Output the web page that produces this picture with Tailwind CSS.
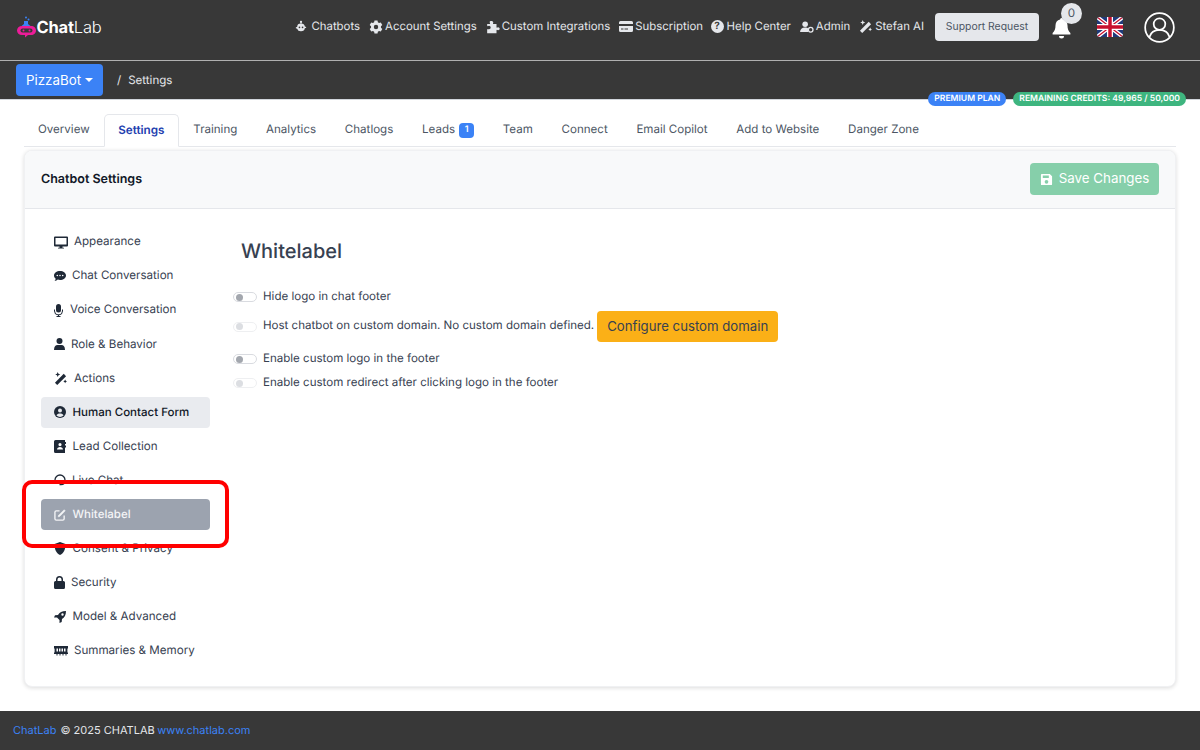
<!DOCTYPE html>
<html lang="en">
<head>
<meta charset="utf-8">
<title>ChatLab Settings</title>
<script src="https://cdn.jsdelivr.net/npm/@tailwindcss/browser@4"></script>
</head>
<body class="font-[Inter,sans-serif] [text-rendering:geometricPrecision] [&_svg]:shrink-0 bg-white text-[#374151] w-[1200px] h-[750px] overflow-hidden relative flex flex-col">

<header class="h-[61px] shrink-0 bg-[#383838] border-b border-[#b0b0b0] flex items-center pl-[17px] pr-[25px] pb-[6px] text-[11.4px] text-[#e5e7eb]">
  <div class="flex items-center">
    <svg class="w-[20px] h-[22px]" viewBox="0 0 20 22">
      <circle cx="9" cy="1.500" r="1" fill="#3b82f6"/><circle cx="11.500" cy="3.500" r="1" fill="#3b82f6"/>
      <path d="M7 5h4v3l2.500 2h-9L7 8z" fill="#3b82f6"/>
      <path d="M5 10h9c3 0 5 2 5 4.500s-2 4.500-5 4.500h-3l-3 2.500v-2.500H5c-3 0-5-2-5-4.500S2 10 5 10z" fill="#ec1c99"/>
      <rect x="3.500" y="12.500" width="12" height="4" rx="2" fill="#383838"/>
      <circle cx="6.500" cy="14.500" r="1" fill="#ec1c99"/><circle cx="12.500" cy="14.500" r="1" fill="#ec1c99"/>
    </svg>
    <span class="text-[16.500px] text-white font-bold ml-[-0.5px] tracking-[-0.2px]">Chat<span class="font-light">Lab</span></span>
  </div>
  <nav class="ml-auto flex items-center gap-[9px] whitespace-nowrap">
    <a class="flex items-center gap-[4px]"><svg class="w-[12px] h-[13px]" viewBox="0 0 14 14" fill="#e5e7eb"><rect x="6.300" y="0.500" width="1.400" height="3"/><circle cx="7" cy="1.500" r="1.300"/><path d="M7 3.500a4.500 4 0 0 1 4.500 3.500l1.500.5v1l-1.500.5A4.500 4 0 0 1 7 12.500 4.500 4 0 0 1 2.500 9.500L1 9V8l1.500-.5A4.500 4 0 0 1 7 3.500z"/><circle cx="5.200" cy="8" r="1" fill="#383838"/><circle cx="8.800" cy="8" r="1" fill="#383838"/></svg>Chatbots</a>
    <a class="flex items-center gap-[2px]"><svg class="w-[14px] h-[14px]" viewBox="0 0 24 24" fill="#e5e7eb"><path fill-rule="evenodd" d="M14.600 1l.6 3 2 1.200 3-1 2.600 4.500-2.300 2 0 2.600 2.300 2-2.600 4.500-3-1-2 1.200-.6 3H9.400l-.6-3-2-1.200-3 1L1.200 15.300l2.300-2v-2.600l-2.300-2L3.800 4.200l3 1 2-1.200.6-3zM12 8.200a3.800 3.800 0 1 0 0 7.600 3.800 3.800 0 0 0 0-7.600z"/></svg>Account Settings</a>
    <a class="flex items-center gap-[2px]"><svg class="w-[14px] h-[14px]" viewBox="0 0 24 24" fill="#e5e7eb"><path d="M9 1.500c2 0 3.500 1.200 3.500 2.800 0 .9-.6 1.300-.6 2 0 .4.400.7 1 .7H18v5.100c0 .6.300 1 .7 1 .7 0 1.100-.6 2-.6 1.600 0 2.800 1.300 2.800 2.500s-1.200 2.500-2.800 2.500c-.9 0-1.300-.6-2-.6-.4 0-.7.400-.7 1V22.500H2v-6c0-.8.500-1.200 1-1.200.7 0 1.100.7 2.200.7 1.500 0 2.800-1.300 2.800-3s-1.300-3-2.800-3c-1.100 0-1.500.7-2.200.7-.5 0-1-.4-1-1.200V7h4.100c.6 0 1-.3 1-.7 0-.7-.6-1.100-.6-2C5.500 2.700 7 1.500 9 1.500z"/></svg>Custom Integrations</a>
    <a class="flex items-center gap-[2px]"><svg class="w-[14px] h-[13px]" viewBox="0 0 14 13" fill="#e5e7eb"><path d="M1.500 1h11A1.500 1.500 0 0 1 14 2.500V4H0V2.500A1.500 1.500 0 0 1 1.500 1zM0 6h14v4.500a1.500 1.500 0 0 1-1.500 1.500h-11A1.500 1.500 0 0 1 0 10.500z"/><rect x="2" y="8.500" width="2.500" height="1" fill="#383838"/><rect x="5.500" y="8.500" width="3.500" height="1" fill="#383838"/></svg>Subscription</a>
    <a class="-ml-[1.500px] flex items-center gap-[3px]"><span class="w-[13px] h-[13px] rounded-full bg-[#e5e7eb] text-[#383838] text-[10px] font-bold flex items-center justify-center">?</span>Help Center</a>
    <a class="flex items-center gap-[2px]"><svg class="w-[14px] h-[12px]" viewBox="0 0 15 13" fill="#e5e7eb"><circle cx="5.500" cy="3.500" r="3"/><path d="M0 12c0-3 2-5 5.500-5 1.500 0 2.500.4 3.300 1v4z"/><circle cx="11.500" cy="9.500" r="2.500" fill="none" stroke="#e5e7eb" stroke-width="1.400"/></svg>Admin</a>
    <a class="flex items-center gap-[3px]"><svg class="w-[13px] h-[13px]" viewBox="0 0 14 14" fill="#e5e7eb"><path d="M10.500 2l2.500 2.500L3.500 14 1 11.500z"/><path d="M4 0l.8 1.900 1.900.8-1.900.8L4 5.400l-.8-1.900-1.900-.8 1.900-.8zM12 8l.7 1.500 1.300.6-1.300.6-.7 1.500-.7-1.500-1.300-.6 1.300-.6z"/></svg>Stefan AI</a>
  </nav>
  <button class="ml-[11px] h-[28px] w-[104px] rounded-[4px] bg-[#e5e7eb] text-[#4b5563] text-[10.42px] whitespace-nowrap flex items-center justify-center">Support Request</button>
  <div class="relative ml-[11px] w-[24px] h-[30px] flex items-center">
    <svg class="w-[19px] h-[22px] mt-[2px] ml-[2px]" viewBox="0 0 19 22" fill="#fff"><path d="M9.500 1a1.400 1.400 0 0 1 1.400 1.500c3 .6 4.600 3 4.600 6 0 3.500.8 5.400 2.900 7.500v1.500H.6V16c2.100-2.100 2.900-4 2.900-7.500 0-3 1.600-5.400 4.600-6A1.400 1.400 0 0 1 9.500 1z"/><path d="M7 19h5a2.500 2.500 0 0 1-5 0z"/></svg>
    <span class="absolute left-[11px] top-[-9px] w-[21px] h-[21px] rounded-full bg-[#e5e7eb] text-[#4b5563] text-[11.67px] flex items-center justify-center">0</span>
  </div>
  <svg class="ml-[23px] w-[26px] h-[20px] rounded-[3px]" viewBox="0 0 60 46" preserveAspectRatio="none">
    <rect width="60" height="46" fill="#1f3a7a"/>
    <path d="M0 0L60 46M60 0L0 46" stroke="#fff" stroke-width="9"/>
    <path d="M0 0L60 46M60 0L0 46" stroke="#c8102e" stroke-width="3"/>
    <path d="M30 0V46M0 23H60" stroke="#fff" stroke-width="14"/>
    <path d="M30 0V46M0 23H60" stroke="#c8102e" stroke-width="8"/>
  </svg>
  <svg class="ml-[21px] w-[31px] h-[31px]" viewBox="0 0 32 32" fill="none" stroke="#fff" stroke-width="1.800"><circle cx="16" cy="16" r="14.800"/><circle cx="16" cy="12.500" r="6"/><path d="M5.500 26c1.500-5 5-7.500 10.500-7.500S25 21 26.500 26"/></svg>
</header>

<div class="h-[39px] shrink-0 bg-[#383838] flex items-center pl-[16px] relative border-b border-[#d1d5db]">
  <button class="h-[32px] w-[87px] rounded-[4px] bg-[#3b82f6] text-white text-[13.33px] flex items-center justify-center gap-[4px]"><span class="pt-[1px]">PizzaBot</span><span class="w-0 h-0 border-x-[4px] border-x-transparent border-t-[4px] border-t-white"></span></button>
  <span class="ml-[14px] pt-[1px] text-[11.55px] text-[#e5e7eb]">/</span>
  <span class="ml-[7px] pt-[1px] text-[11.55px] text-[#e5e7eb]">Settings</span>
  <div class="absolute right-[14px] top-[31px] flex gap-[7px] text-[8.57px] font-semibold text-white leading-none">
    <span class="h-[14px] px-[6px] rounded-full bg-[#3b82f6] flex items-center">PREMIUM PLAN</span>
    <span class="h-[14px] px-[6px] rounded-full bg-[#3eb57f] flex items-center">REMAINING CREDITS: 49,965 / 50,000</span>
  </div>
</div>

<main class="flex-1 px-[24px] pt-[14px] flex flex-col">
  <div class="flex h-[33px] border-b border-[#e5e7eb] text-[11.55px] text-[#4b5563] whitespace-nowrap">
    <a class="px-[14px] flex items-center">Overview</a>
    <a class="px-[13.500px] flex items-center border border-[#e5e7eb] border-b-white rounded-t-[5px] h-[33px] text-[#1e40af] font-semibold text-[11.7px] bg-white">Settings</a>
    <a class="px-[14.380px] flex items-center">Training</a>
    <a class="px-[14.380px] flex items-center">Analytics</a>
    <a class="px-[14.380px] flex items-center">Chatlogs</a>
    <a class="px-[14.380px] flex items-center gap-[4px]">Leads<span class="w-[15px] h-[15px] rounded-[4px] bg-[#3b82f6] text-white text-[9px] font-semibold flex items-center justify-center">1</span></a>
    <a class="px-[14.380px] flex items-center">Team</a>
    <a class="px-[14.380px] flex items-center">Connect</a>
    <a class="px-[14.380px] flex items-center">Email Copilot</a>
    <a class="px-[14.380px] flex items-center">Add to Website</a>
    <a class="px-[14.380px] flex items-center">Danger Zone</a>
  </div>

  <section class="mt-[3px] h-[537px] rounded-[8px] bg-white border border-[#f0f1f3] shadow-[0_1px_4px_rgba(0,0,0,0.14)] flex flex-col overflow-hidden">
    <div class="h-[58px] shrink-0 border-b border-[#e5e7eb] bg-[#f8f9fa] flex items-center justify-between px-[16px]">
      <h2 class="pt-[2px] text-[12.500px] font-semibold text-[#111827]">Chatbot Settings</h2>
      <button class="mb-[2px] pt-[1px] h-[32px] w-[129px] rounded-[4px] bg-[#86cfaa] text-white text-[13.33px] flex items-center justify-center gap-[6px]">
        <svg class="w-[13px] h-[13px]" viewBox="0 0 14 14" fill="#fff"><path fill-rule="evenodd" d="M2 1h8.500L13 3.500V12a1 1 0 0 1-1 1H2a1 1 0 0 1-1-1V2a1 1 0 0 1 1-1zm1 1.800V5.500h6.500V2.800zM7 7.500a2 2 0 1 0 0 4 2 2 0 0 0 0-4z"/></svg>
        Save Changes
      </button>
    </div>
    <div class="flex flex-1">
      <aside class="w-[186px] shrink-0 pl-[16px] pt-[17.500px] flex flex-col gap-[3.080px] text-[11.6px] text-[#374151] whitespace-nowrap">
        <a class="h-[31px] w-[169px] px-[13px] flex items-center gap-[6px]"><svg class="w-[14px] h-[13px]" viewBox="0 0 14 13" fill="#1f2937"><path fill-rule="evenodd" d="M1 .5h12a1 1 0 0 1 1 1v8a1 1 0 0 1-1 1H8.500v1.200H10v.8H4v-.8h1.500v-1.200H1a1 1 0 0 1-1-1v-8a1 1 0 0 1 1-1zm.5 1.500v6.500h11V2z"/></svg>Appearance</a>
        <a class="h-[31px] w-[169px] px-[13px] flex items-center gap-[6px]"><svg class="w-[12px] h-[12px]" viewBox="0 0 12 12" fill="#1f2937"><path fill-rule="evenodd" d="M6 1c3.300 0 6 2 6 4.500S9.300 10 6 10c-.8 0-1.600-.1-2.200-.4C3 10.300 1.800 11 .5 11c.6-.6 1.100-1.500 1.200-2.300C.6 7.900 0 6.800 0 5.500 0 3 2.700 1 6 1zM3.300 4.700a.8.800 0 1 0 0 1.600.8.800 0 0 0 0-1.600zm2.700 0a.8.800 0 1 0 0 1.600.8.800 0 0 0 0-1.600zm2.700 0a.8.800 0 1 0 0 1.600.8.800 0 0 0 0-1.600z"/></svg>Chat Conversation</a>
        <a class="h-[31px] w-[169px] px-[13px] flex items-center gap-[7px]"><svg class="w-[9px] h-[13px]" viewBox="0 0 9 13" fill="#1f2937"><rect x="2" y="0" width="5" height="8.500" rx="2.500"/><path d="M.5 5.500v1.500a4 4 0 0 0 8 0V5.500" fill="none" stroke="#1f2937" stroke-width="1"/><rect x="4" y="10.500" width="1" height="1.500"/><rect x="2.500" y="12" width="4" height="1"/></svg>Voice Conversation</a>
        <a class="h-[31px] w-[169px] px-[13px] flex items-center gap-[6px]"><svg class="w-[11px] h-[12px]" viewBox="0 0 11 12" fill="#1f2937"><circle cx="5.500" cy="3" r="3"/><path d="M0 12c0-3.500 1.500-5 3.500-5h4c2 0 3.500 1.500 3.500 5z"/></svg>Role &amp; Behavior</a>
        <a class="h-[31px] w-[169px] px-[13px] flex items-center gap-[7px]"><svg class="w-[13px] h-[13px]" viewBox="0 0 14 14" fill="#1f2937"><path d="M10.500 2l2.500 2.500L3.500 14 1 11.500z"/><path d="M4 0l.8 1.900 1.900.8-1.900.8L4 5.400l-.8-1.900-1.900-.8 1.900-.8zM12 8l.7 1.500 1.300.6-1.300.6-.7 1.500-.7-1.500-1.300-.6 1.300-.6z"/></svg>Actions</a>
        <a class="h-[31px] w-[169px] px-[13px] flex items-center gap-[6.500px] rounded-[4px] bg-[#e9ebef] text-[#111827] font-medium text-[11.5px]"><svg class="w-[12px] h-[12px]" viewBox="0 0 12 12"><circle cx="6" cy="6" r="6" fill="#1f2937"/><circle cx="6" cy="4.500" r="2" fill="#e9ebef"/><path d="M2.500 9.500c.5-1.500 2-2 3.500-2s3 .5 3.500 2a5 5 0 0 1-7 0z" fill="#e9ebef"/></svg>Human Contact Form</a>
        <a class="h-[31px] w-[169px] px-[13px] flex items-center gap-[6.500px]"><svg class="w-[12px] h-[13px]" viewBox="0 0 12 13" fill="#1f2937"><path fill-rule="evenodd" d="M1.500 0H11v13H1.500A1.500 1.500 0 0 1 0 11.500v-10A1.500 1.500 0 0 1 1.500 0zM6 3a1.600 1.600 0 1 0 0 3.200A1.600 1.600 0 0 0 6 3zM3 9.500h6C9 8 7.500 7 6 7S3 8 3 9.500z"/><rect x="11" y="2" width="1" height="2"/><rect x="11" y="5.500" width="1" height="2"/></svg>Lead Collection</a>
        <a class="h-[31px] w-[169px] px-[13px] flex items-center gap-[6px]"><svg class="w-[12px] h-[13px]" viewBox="0 0 12 13" fill="none" stroke="#1f2937" stroke-width="1.300"><path d="M1 7V6a5 5 0 0 1 10 0v1"/><path d="M11 7c0 2-1.500 3.500-4 3.500H5.500"/></svg>Live Chat</a>
        <a class="h-[31px] w-[169px] px-[13px] flex items-center gap-[6.500px] rounded-[4px] bg-[#9ca3af] text-[#f3f4f6] font-medium text-[11.5px]"><svg class="w-[12px] h-[12px]" viewBox="0 0 13 13" fill="none" stroke="#f3f4f6" stroke-width="1.500"><path d="M6 2H2.500A1.500 1.500 0 0 0 1 3.500v7A1.500 1.500 0 0 0 2.500 12h7a1.500 1.500 0 0 0 1.500-1.500V7"/><path d="M11 .8l1.200 1.200-6 6-1.700.5.500-1.700z" fill="#f3f4f6" stroke-width="0.600"/></svg>Whitelabel</a>
        <a class="h-[31px] w-[169px] px-[13px] flex items-center gap-[6.500px]"><svg class="w-[12px] h-[13px]" viewBox="0 0 12 13" fill="#1f2937"><path d="M6 0l5.500 2c0 5-1.500 9-5.500 11C2 11 .5 7 .5 2z"/></svg>Consent &amp; Privacy</a>
        <a class="h-[31px] w-[169px] px-[13px] flex items-center gap-[6px]"><svg class="w-[11px] h-[13px]" viewBox="0 0 11 13" fill="#1f2937"><path d="M5.500 0A3.500 3.500 0 0 1 9 3.500V5h.5A1.500 1.500 0 0 1 11 6.500v5A1.500 1.500 0 0 1 9.500 13h-8A1.500 1.500 0 0 1 0 11.500v-5A1.500 1.500 0 0 1 1.500 5H2V3.500A3.500 3.500 0 0 1 5.500 0zm0 1.500a2 2 0 0 0-2 2V5h4V3.500a2 2 0 0 0-2-2z"/></svg>Security</a>
        <a class="h-[31px] w-[169px] px-[13px] flex items-center gap-[6.500px]"><svg class="w-[12px] h-[12px]" viewBox="0 0 12 12" fill="#1f2937"><path fill-rule="evenodd" d="M12 0c0 4-1.500 6.500-4 8l-.3 3-2.200 1V9L3 6.500H0l1-2.200 3-.3C5.500 1.500 8 0 12 0zM8.500 2.300a1.200 1.200 0 1 0 0 2.400 1.200 1.200 0 0 0 0-2.400z"/></svg>Model &amp; Advanced</a>
        <a class="h-[31px] w-[169px] px-[13px] flex items-center gap-[6px]"><svg class="w-[14px] h-[11px]" viewBox="0 0 14 11" fill="#1f2937"><path d="M0 1h14v2.500h-.6v4H14V9h-1.500V10.500h-1V9H9.500v1.500h-1V9h-2v1.500h-1V9h-2v1.500h-1V9H0V7.500h.6v-4H0z"/><rect x="2.500" y="3.500" width="1.500" height="3" fill="#fff"/><rect x="5" y="3.500" width="1.500" height="3" fill="#fff"/><rect x="7.500" y="3.500" width="1.500" height="3" fill="#fff"/><rect x="10" y="3.500" width="1.500" height="3" fill="#fff"/></svg>Summaries &amp; Memory</a>
      </aside>
      <div class="flex-1 pl-[22px] text-[11.55px] text-[#374151] whitespace-nowrap">
        <h1 class="ml-[8px] mt-[29px] text-[20px] leading-[26px] font-[450] text-[#374151]">Whitelabel</h1>
        <div class="mt-[21px] flex items-center h-[24px] gap-[6px]">
          <span class="w-[24px] h-[10px] rounded-full bg-white border border-[#d9dbe0] flex items-center pl-[1.500px]"><span class="w-[7px] h-[7px] rounded-full bg-[#a3a7ae]"></span></span>Hide logo in chat footer
        </div>
        <div class="mt-[1px] flex items-center h-[33px] gap-[6px]">
          <span class="w-[24px] h-[10px] rounded-full bg-white border border-[#eeeff1] flex items-center pl-[1.500px]"><span class="w-[7px] h-[7px] rounded-full bg-[#dcdee2]"></span></span><span class="-translate-y-[1px]">Host chatbot on custom domain. No custom domain defined.</span>
          <button class="ml-[-3px] h-[31px] w-[181px] rounded-[4px] bg-[#fbb017] text-[#374151] text-[13.2px]">Configure custom domain</button>
        </div>
        <div class="mt-[4px] flex items-center h-[24px] gap-[6px]">
          <span class="w-[24px] h-[10px] rounded-full bg-white border border-[#d9dbe0] flex items-center pl-[1.500px]"><span class="w-[7px] h-[7px] rounded-full bg-[#a3a7ae]"></span></span>Enable custom logo in the footer
        </div>
        <div class="flex items-center h-[24px] gap-[6px]">
          <span class="w-[24px] h-[10px] rounded-full bg-white border border-[#eeeff1] flex items-center pl-[1.500px]"><span class="w-[7px] h-[7px] rounded-full bg-[#dcdee2]"></span></span>Enable custom redirect after clicking logo in the footer
        </div>
      </div>
    </div>
  </section>
</main>

<footer class="h-[39px] shrink-0 bg-[#383838] flex items-center px-[13px] text-[11px] text-[#e5e7eb]">
  <a class="text-[#3b82f6]">ChatLab</a><span class="ml-[4px]">© 2025 CHATLAB</span><a class="ml-[2.500px] text-[#3b82f6]">www.chatlab.com</a>
</footer>

<div class="absolute left-[22px] top-[480px] w-[206.500px] h-[67.500px] rounded-[10px] border-[4px] border-[#f00] pointer-events-none"></div>
</body>
</html>
